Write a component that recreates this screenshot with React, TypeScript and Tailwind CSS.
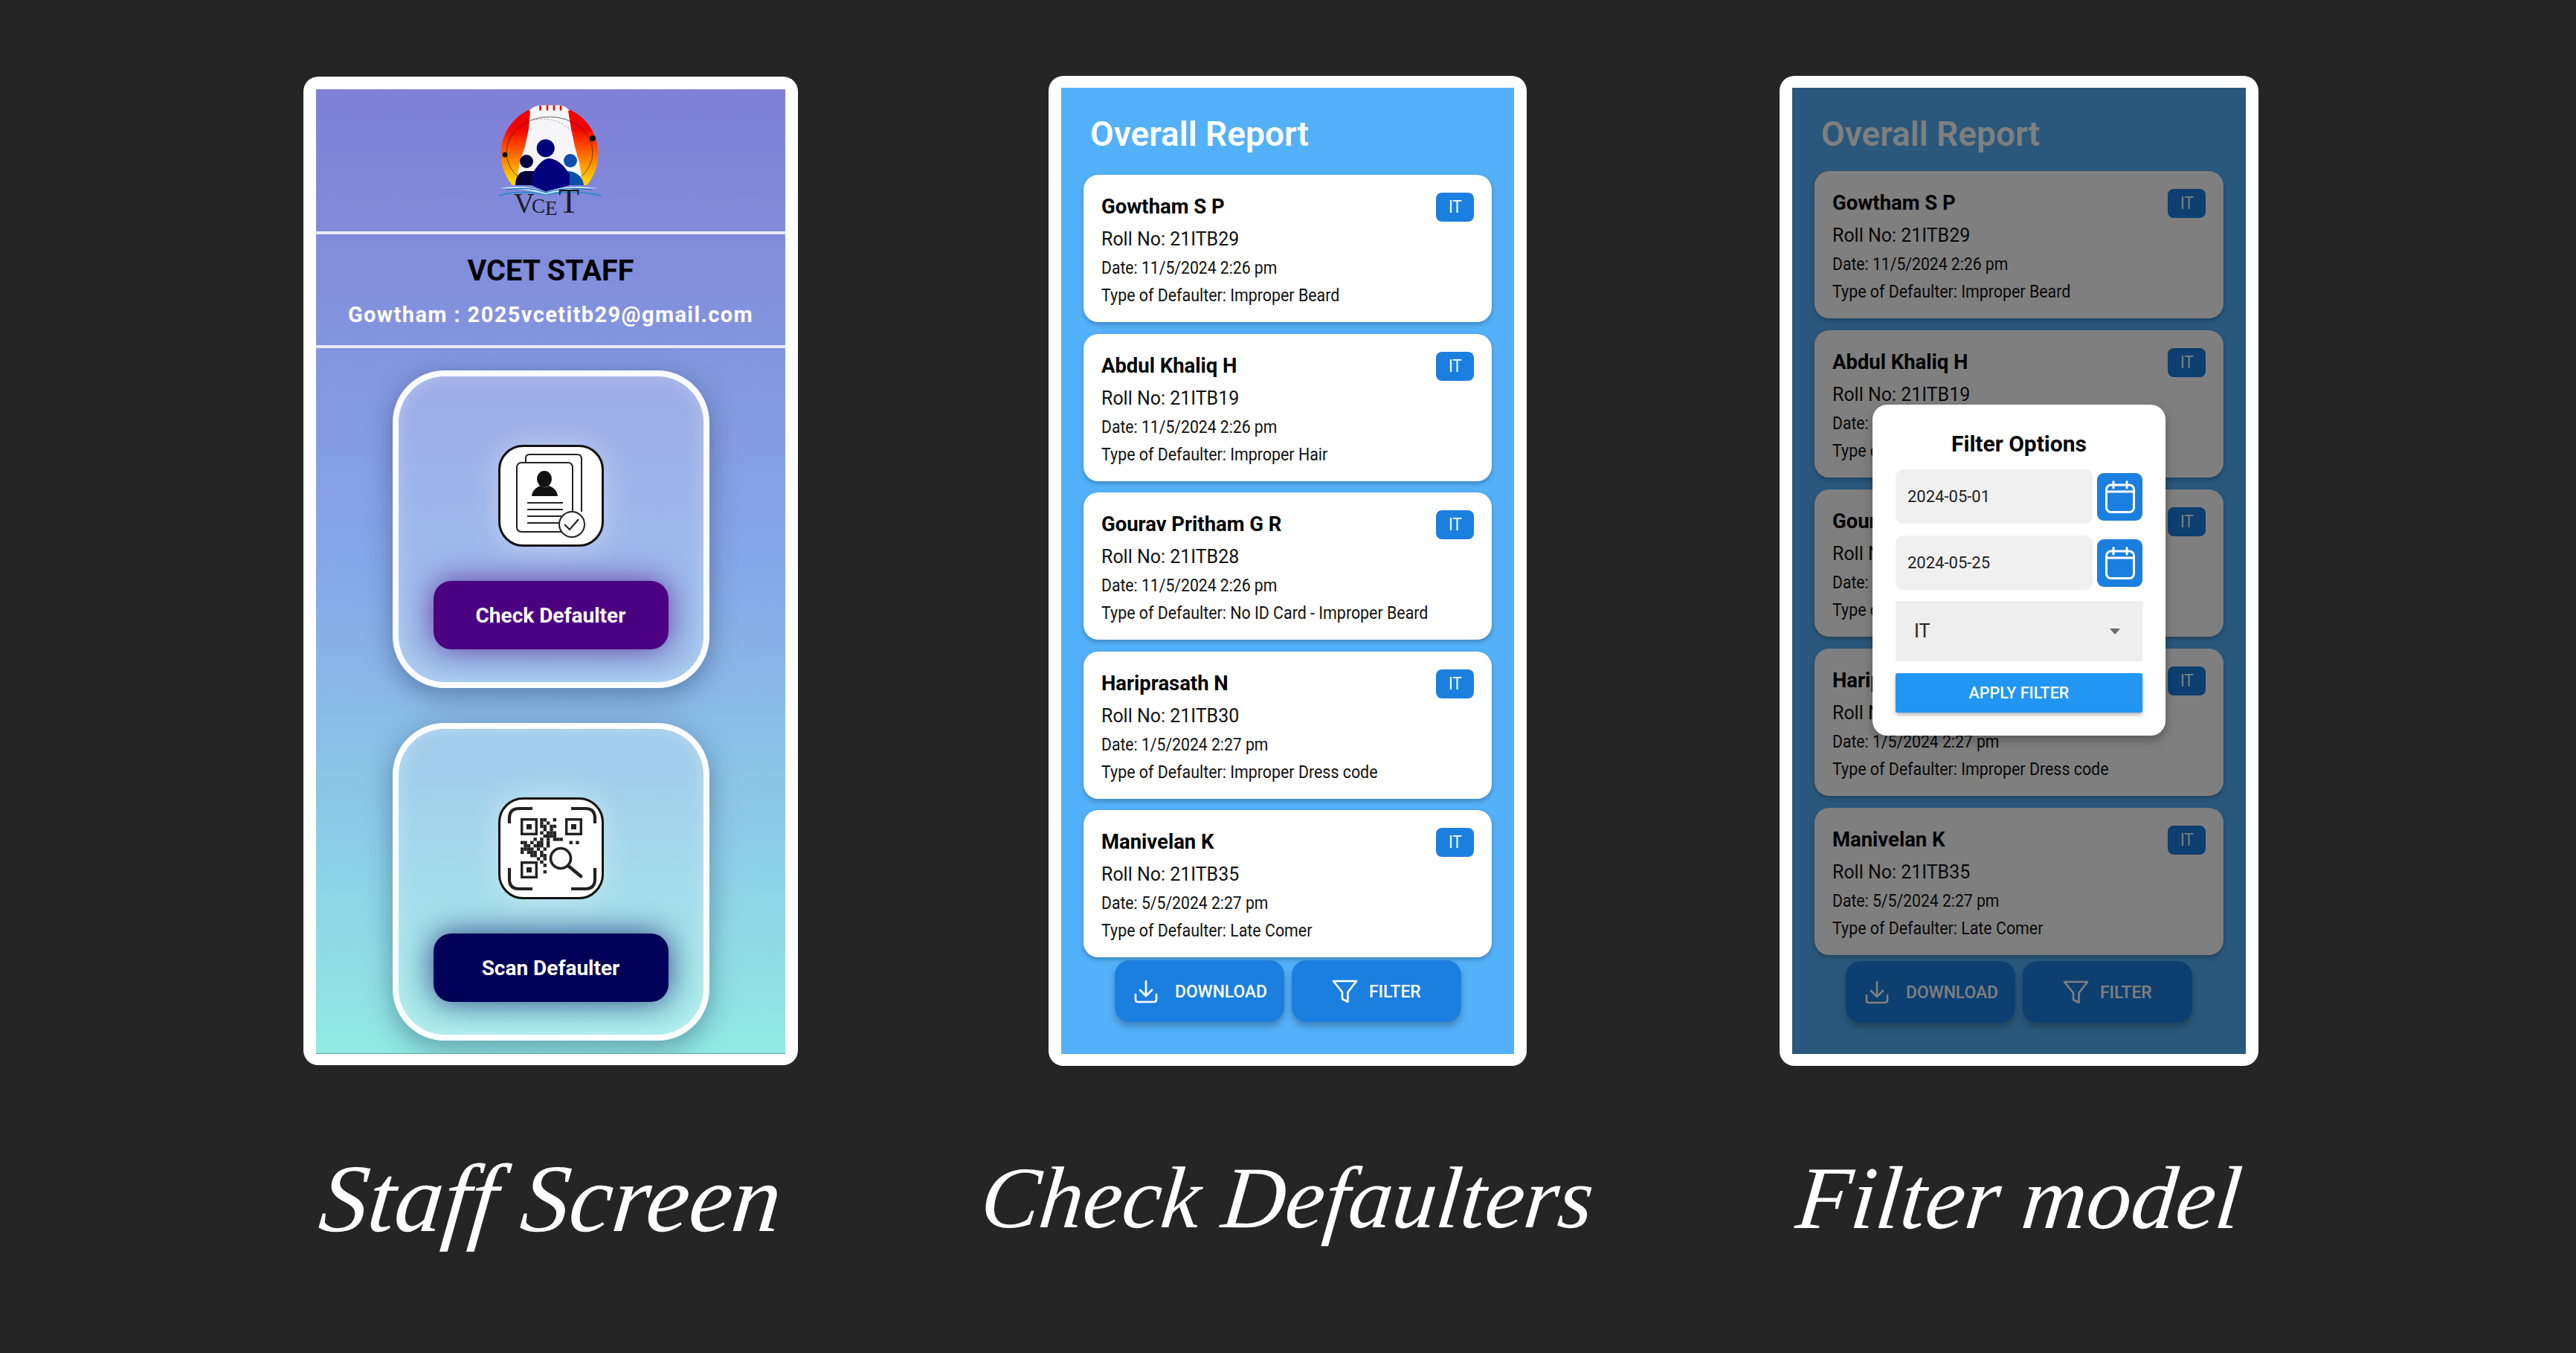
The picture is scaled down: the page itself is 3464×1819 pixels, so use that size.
const people = [
  { name: "Gowtham S P", roll: "21ITB29", date: "11/5/2024 2:26 pm", type: "Improper Beard" },
  { name: "Abdul Khaliq H", roll: "21ITB19", date: "11/5/2024 2:26 pm", type: "Improper Hair" },
  { name: "Gourav Pritham G R", roll: "21ITB28", date: "11/5/2024 2:26 pm", type: "No ID Card - Improper Beard" },
  { name: "Hariprasath N", roll: "21ITB30", date: "1/5/2024 2:27 pm", type: "Improper Dress code" },
  { name: "Manivelan K", roll: "21ITB35", date: "5/5/2024 2:27 pm", type: "Late Comer" },
];

function Logo() {
  return (
    <svg width="150" height="160" viewBox="0 0 150 160">
      <defs>
        <linearGradient id="sun" x1="0" y1="0" x2="0" y2="1">
          <stop offset="0.24" stopColor="#f40000" />
          <stop offset="0.42" stopColor="#ff4a00" />
          <stop offset="0.62" stopColor="#ff9a00" />
          <stop offset="0.78" stopColor="#ffd500" />
        </linearGradient>
        <clipPath id="sunclip">
          <rect x="0" y="0" width="150" height="114" />
        </clipPath>
      </defs>
      <g clipPath="url(#sunclip)">
        <circle cx="73" cy="72" r="65.5" fill="url(#sun)" />
        <path d="M47 14 L98 14 L102 38 L107 62 L113 84 L118 114 L28 114 L33 82 L40 62 L45 38 Z" fill="#f6f5f7" />
        <path d="M45 14 C50 9 56 7 60 6.5 L88 6.5 C92 7 97 10 100 14 Z" fill="#f6f5f7" />
      </g>
      <path d="M60.5 8 V12.5 M70 7.5 V12.5 M79 7.5 V12.5 M88 8 V12.5" stroke="#f40000" strokeWidth="2.6" strokeLinecap="round" />
      <ellipse cx="73" cy="70" rx="58" ry="48" fill="none" stroke="#33231a" strokeWidth="0.7" clipPath="url(#sunclip)" />
      <path d="M45 28 C64 22 90 24 107 46" fill="none" stroke="#999" strokeWidth="0.7" strokeDasharray="3 2" />
      <circle cx="131" cy="51" r="4" fill="#111" />
      <circle cx="13" cy="73" r="3.5" fill="#111" />
      <circle cx="42" cy="82" r="9" fill="#02023f" />
      <path d="M27 114 C27 103 32 96 40 95 L52 95 L54 114 Z" fill="#02023f" />
      <circle cx="101" cy="81" r="9" fill="#0a4fae" />
      <path d="M96 95 C108 95 118 102 119 114 L96 114 Z" fill="#0a4fae" />
      <circle cx="67.7" cy="64.3" r="12" fill="#02027e" />
      <path d="M49 114 L50 99 C54 90 64 78 72 78 C82 78 94 88 100 100 L100 114 L68 123 Z" fill="#02027e" />
      <path d="M5 118 C30 114 50 116 68 123 C86 116 110 114 138 118 C110 118 88 120 68 128 C48 120 28 118 5 118 Z" fill="#c7e6f4" />
      <path d="M5 128 C24 122 48 122 68 127 C88 122 116 122 143 128" fill="none" stroke="#2a8ad0" strokeWidth="1.8" />
      <path d="M14 120 C34 117 52 118 68 124 C86 118 106 117 130 120" fill="none" stroke="#1a6fb8" strokeWidth="1.2" />
      <text fill="#1c1c2a" fontFamily="'Liberation Serif', serif">
        <tspan fontSize="38" x="25" y="151">V</tspan>
        <tspan fontSize="27" x="49" y="151">C</tspan>
        <tspan fontSize="27" x="67" y="154">E</tspan>
        <tspan fontSize="46" x="85" y="151">T</tspan>
      </text>
    </svg>
  );
}

function DocIcon() {
  return (
    <svg width="142" height="137" viewBox="0 0 142 137">
      <rect x="1.5" y="1.5" width="139" height="134" rx="32" fill="#fff" stroke="#111" strokeWidth="3" />
      <path d="M37 24 V18 Q37 13 42 13 H106 Q112 13 112 19 V90" fill="none" stroke="#222" strokeWidth="2" />
      <rect x="25" y="24" width="75" height="93" rx="6" fill="#fff" stroke="#222" strokeWidth="2" />
      <ellipse cx="62" cy="46" rx="10" ry="11" fill="#111" />
      <path d="M45 69 C46 60 52 57 57 55 C60 58 65 58 68 55 C73 57 79 60 80 69 Z" fill="#111" />
      <path d="M39 78 H87 M39 87 H87 M39 96 H87 M39 105 H83" stroke="#222" strokeWidth="2.2" />
      <circle cx="99" cy="107" r="17" fill="#fff" stroke="#222" strokeWidth="2" />
      <path d="M89 107 L96 114 L108 100" fill="none" stroke="#222" strokeWidth="2.2" />
    </svg>
  );
}

const qrRows = [
  "......##..#........",
  "......#.#..........",
  "......##.##........",
  ".......#.#.........",
  "......#.###........",
  ".......####........",
  "....#.#.#.###......",
  "##.#.##.#......#.#.",
  ".##.###.#..........",
  "####.#.#...........",
  "#.###.#............",
  "...##.##...........",
  ".....#.#...........",
  "......#............",
  ".......#...........",
  "...................",
  ".......#...........",
];

function Finder({ x, y }: { x: number; y: number }) {
  return (
    <g>
      <rect x={x + 1.7} y={y + 1.7} width="19.6" height="19.6" fill="none" stroke="#222" strokeWidth="3.4" />
      <rect x={x + 8} y={y + 8} width="7" height="7" fill="#222" />
    </g>
  );
}

function QrIcon() {
  return (
    <svg width="142" height="137" viewBox="0 0 142 137">
      <rect x="1.5" y="1.5" width="139" height="134" rx="32" fill="#fff" stroke="#111" strokeWidth="3" />
      <path d="M15 35 V28 Q15 15 28 15 H46 M98 15 H117 Q130 15 130 28 V35 M15 95 V110 Q15 123 28 123 H46 M98 123 H117 Q130 123 130 110 V95" fill="none" stroke="#222" strokeWidth="4.2" />
      <Finder x={30} y={28} />
      <Finder x={90} y={28} />
      <Finder x={30} y={86} />
      {qrRows.map((row, r) =>
        row.split("").map((c, i) =>
          c === "#" ? <rect key={`${r}-${i}`} x={30 + i * 4.37} y={28 + r * 4.37} width="4.4" height="4.4" fill="#222" /> : null
        )
      )}
      <circle cx="84" cy="82" r="13.5" fill="#fff" stroke="#222" strokeWidth="3.6" />
      <path d="M94 92 L111 106" stroke="#222" strokeWidth="4.6" strokeLinecap="round" />
    </svg>
  );
}

function DownloadIcon() {
  return (
    <svg width="32" height="32" viewBox="0 0 32 32" fill="none" stroke="currentColor" strokeWidth="2.6" strokeLinecap="round" strokeLinejoin="round">
      <path d="M16 2 V21 M8 14 L16 22 L24 14" />
      <path d="M2 20 V27 Q2 30 5 30 H27 Q30 30 30 27 V20" />
    </svg>
  );
}

function FilterIcon() {
  return (
    <svg width="35" height="32" viewBox="0 0 35 32" fill="none" stroke="currentColor" strokeWidth="2.6" strokeLinejoin="round">
      <path d="M2 2 H33 L21.5 17 V30 L14 26 V17 Z" />
    </svg>
  );
}

function CalendarIcon() {
  return (
    <svg width="40" height="44" viewBox="0 0 40 44" fill="none" stroke="#fff" strokeWidth="3" strokeLinecap="round">
      <rect x="1.5" y="6" width="37" height="36.5" rx="6" />
      <path d="M2 15 H38 M11 1.5 V10 M29 1.5 V10" />
    </svg>
  );
}

function ActionCard({ icon, label, color, glow, first }: { icon: React.ReactNode; label: string; color: string; glow: string; first?: boolean }) {
  return (
    <div className={`flex h-[427px] w-[426px] flex-col items-center rounded-[70px] border-[8px] border-white/95 bg-white/20 shadow-[0_10px_36px_rgba(20,40,80,0.4),inset_0_0_24px_rgba(255,255,255,0.28)] ${first ? "" : "mt-[47px]"}`}>
      <div className="mt-[92px] flex h-[137px] w-[142px] rounded-[32px] shadow-[0_0_40px_rgba(255,255,255,0.4)]">{icon}</div>
      <button className={`mt-[46px] flex h-[92px] w-[316px] items-center justify-center rounded-[24px] pt-[2px] text-[28px] font-bold text-white ${color} ${glow}`}>{label}</button>
    </div>
  );
}

function StaffScreen() {
  return (
    <div className="mt-[1px] w-[665px] rounded-[20px] bg-white px-[17px] pb-[15px] pt-[17px]">
      <div className="flex h-[1297px] flex-col items-center overflow-hidden border-b border-[#5f9f9f] bg-gradient-to-b from-[#7f7fd5] via-[#86a8e7] to-[#91eae4]">
        <div className="flex h-[191px] w-full items-start justify-center pt-[15px]">
          <Logo />
        </div>
        <div className="h-[4px] w-full bg-[#e8ecf8]" />
        <div className="flex h-[149px] w-full flex-col items-center">
          <div className="mt-[27px] text-[39.5px] font-bold leading-[44px] text-black">VCET STAFF</div>
          <div className="mt-[19px] text-[29px] font-bold leading-[36px] tracking-[1.4px] text-white">Gowtham : 2025vcetitb29@gmail.com</div>
        </div>
        <div className="h-[4px] w-full bg-[#e8ecf8]" />
        <div className="mt-[30px] flex flex-col items-center">
          <ActionCard first icon={<DocIcon />} label="Check Defaulter" color="bg-[#4b0082]" glow="shadow-[0_0_40px_rgba(75,0,130,0.7)]" />
          <ActionCard icon={<QrIcon />} label="Scan Defaulter" color="bg-[#000058]" glow="shadow-[0_0_40px_rgba(0,0,88,0.7)]" />
        </div>
      </div>
    </div>
  );
}

function ReportCard({ p }: { p: (typeof people)[number] }) {
  return (
    <div className="h-[198px] w-full rounded-[20px] bg-white px-[24px] pt-[24px] shadow-[0_3px_6px_rgba(0,0,0,0.25)]">
      <div className="flex h-[39px] items-start justify-between">
        <div className="origin-left scale-x-[0.98] whitespace-nowrap text-[28px] font-bold leading-[38px] text-black">{p.name}</div>
        <div className="flex h-[39px] w-[51px] items-center justify-center rounded-[8px] bg-[#1b7fe0] text-white">
          <span className="scale-x-[0.9] text-[23px] leading-none">IT</span>
        </div>
      </div>
      <div className="mt-[4px] origin-left scale-x-[0.96] whitespace-nowrap text-[26px] leading-[38px] text-[#111]">Roll No: {p.roll}</div>
      <div className="mt-[2px] origin-left scale-x-[0.9] whitespace-nowrap text-[23.5px] leading-[36px] text-[#111]">Date: {p.date}</div>
      <div className="mt-[1px] origin-left scale-x-[0.91] whitespace-nowrap text-[23.5px] leading-[36px] text-[#111]">Type of Defaulter: {p.type}</div>
    </div>
  );
}

function ReportBody({ list, footer }: { list: string; footer: string }) {
  return (
    <>
      <div className="ml-[39px] mt-[35px] text-[46px] font-semibold leading-[54px] text-white">Overall Report</div>
      <div className={`mx-[30px] flex flex-col ${list}`}>
        {people.map((p) => (
          <ReportCard key={p.roll} p={p} />
        ))}
      </div>
      <div className={`flex justify-center gap-[10px] ${footer}`}>
        <button className="flex h-[83px] w-[228px] items-center rounded-[20px] bg-[#1b7fe0] pl-[26px] font-medium text-white shadow-[0_6px_10px_rgba(0,0,0,0.25)]">
          <DownloadIcon />
          <span className="ml-[23px] origin-left scale-x-[0.95] text-[24px]">DOWNLOAD</span>
        </button>
        <button className="flex h-[83px] w-[228px] items-center rounded-[20px] bg-[#1b7fe0] pl-[54px] font-medium text-white shadow-[0_6px_10px_rgba(0,0,0,0.25)]">
          <FilterIcon />
          <span className="ml-[15px] origin-left scale-x-[0.95] text-[24px]">FILTER</span>
        </button>
      </div>
    </>
  );
}

function ReportScreen() {
  return (
    <div className="w-[643px] rounded-[20px] bg-white p-[16px] px-[17px]">
      <div className="flex h-[1299px] flex-col bg-[#53b1f9]">
        <ReportBody list="mt-[28px] gap-[15.5px]" footer="mt-[4px]" />
      </div>
    </div>
  );
}

function DateRow({ value, className }: { value: string; className: string }) {
  return (
    <div className={`flex items-center justify-between ${className}`}>
      <div className="flex h-[73px] w-[265px] items-center rounded-[10px] bg-[#f0f0f0] pl-[16px] text-[22px] text-[#222]">{value}</div>
      <div className="flex h-[64px] w-[61px] items-center justify-center rounded-[9px] bg-[#1b7fe0]">
        <CalendarIcon />
      </div>
    </div>
  );
}

function FilterScreen() {
  return (
    <div className="w-[644px] rounded-[20px] bg-white p-[16px] px-[17px]">
      <div className="relative flex h-[1299px] flex-col bg-[#53b1f9]">
        <ReportBody list="mt-[23px] gap-[16px]" footer="mt-[8px]" />
        <div className="absolute inset-0 bg-black/50" />
        <div className="absolute left-[108px] top-[426px] h-[445px] w-[394px] rounded-[20px] bg-white px-[31px] shadow-[0_6px_14px_rgba(0,0,0,0.3)]">
          <div className="mt-[35px] text-center text-[30px] font-bold leading-[36px] text-black">Filter Options</div>
          <DateRow value="2024-05-01" className="mt-[16px]" />
          <DateRow value="2024-05-25" className="mt-[16px]" />
          <div className="mt-[15px] flex h-[81px] items-center justify-between bg-[#eeeeee] pl-[25px] pr-[30px] text-[25px] text-[#222]">
            IT
            <div className="h-0 w-0 border-x-[7px] border-t-[8px] border-x-transparent border-t-[#6b6b6b]" />
          </div>
          <button className="mt-[16px] flex h-[53px] w-full items-center justify-center rounded-[3px] bg-[#2196f3] pt-[2px] text-[21.5px] font-medium text-white shadow-[0_3px_5px_rgba(0,0,0,0.3)]">APPLY FILTER</button>
        </div>
      </div>
    </div>
  );
}

function Caption({ children, width, size }: { children: React.ReactNode; width: string; size: string }) {
  return (
    <div className={`flex justify-center whitespace-nowrap font-['Liberation_Serif',serif] italic leading-[160px] text-white ${width} ${size}`}>
      <span className="-skew-x-6">{children}</span>
    </div>
  );
}

export default function App() {
  return (
    <div className="h-[1819px] w-[3464px] overflow-hidden bg-[#252525] pl-[408px] pt-[102px] font-['Roboto',sans-serif]">
      <div className="flex items-start">
        <StaffScreen />
        <div className="ml-[337px]">
          <ReportScreen />
        </div>
        <div className="ml-[340px]">
          <FilterScreen />
        </div>
      </div>
      <div className="mt-[98px] flex">
        <Caption width="w-[665px]" size="text-[130px]">Staff Screen</Caption>
        <div className="ml-[337px]">
          <Caption width="w-[643px]" size="text-[118px]">Check Defaulters</Caption>
        </div>
        <div className="ml-[340px]">
          <Caption width="w-[644px]" size="text-[120px]">Filter model</Caption>
        </div>
      </div>
    </div>
  );
}
